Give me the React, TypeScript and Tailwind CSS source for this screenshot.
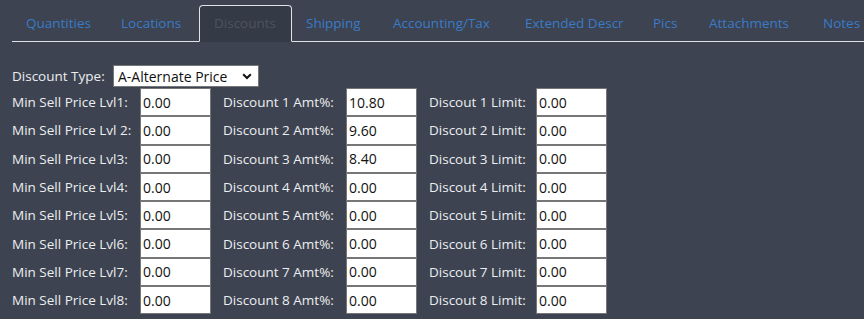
import React from "react";

const tabs: { label: string; w: string; active?: boolean }[] = [
  { label: "Quantities", w: "w-[95px]" },
  { label: "Locations", w: "w-[92px]" },
  { label: "Discounts", w: "w-[93px]", active: true },
  { label: "Shipping", w: "w-[87px]" },
  { label: "Accounting/Tax", w: "w-[132px]" },
  { label: "Extended Descr", w: "w-[128px]" },
  { label: "Pics", w: "w-[56px]" },
  { label: "Attachments", w: "w-[114px]" },
  { label: "Notes", w: "w-[70px]" },
];

const rows = [
  { l1: "Min Sell Price Lvl1:", v1: "0.00", l2: "Discount 1 Amt%:", v2: "10.80", l3: "Discout 1 Limit:", v3: "0.00" },
  { l1: "Min Sell Price Lvl 2:", v1: "0.00", l2: "Discount 2 Amt%:", v2: "9.60", l3: "Discout 2 Limit:", v3: "0.00" },
  { l1: "Min Sell Price Lvl3:", v1: "0.00", l2: "Discount 3 Amt%:", v2: "8.40", l3: "Discout 3 Limit:", v3: "0.00" },
  { l1: "Min Sell Price Lvl4:", v1: "0.00", l2: "Discount 4 Amt%:", v2: "0.00", l3: "Discout 4 Limit:", v3: "0.00" },
  { l1: "Min Sell Price Lvl5:", v1: "0.00", l2: "Discount 5 Amt%:", v2: "0.00", l3: "Discout 5 Limit:", v3: "0.00" },
  { l1: "Min Sell Price Lvl6:", v1: "0.00", l2: "Discount 6 Amt%:", v2: "0.00", l3: "Discout 6 Limit:", v3: "0.00" },
  { l1: "Min Sell Price Lvl7:", v1: "0.00", l2: "Discount 7 Amt%:", v2: "0.00", l3: "Discout 7 Limit:", v3: "0.00" },
  { l1: "Min Sell Price Lvl8:", v1: "0.00", l2: "Discount 8 Amt%:", v2: "0.00", l3: "Discout 8 Limit:", v3: "0.00" },
];

function Field({ value }: { value: string }) {
  return (
    <input
      type="text"
      defaultValue={value}
      className="w-[71px] h-[28.3px] shrink-0 border border-[#767676] bg-white pl-[2px] text-[14px] text-[#111] outline-none font-['Open_Sans',sans-serif]"
    />
  );
}

export default function App() {
  return (
    <div className="w-full min-h-[319px] bg-[#3d4350] overflow-hidden font-['Open_Sans',sans-serif] text-[13.5px]">
      <div className="pt-[5px] pl-[12px]">
        <ul className="flex flex-nowrap whitespace-nowrap border-b border-[#dfe2e6]">
          {tabs.map((t) => (
            <li
              key={t.label}
              className={
                t.active
                  ? `${t.w} shrink-0 h-[37px] -mb-px flex items-center pl-[14px] border border-[#dfe2e6] border-b-[#343a46] rounded-t-[4px] bg-[#343a46] text-[#4d5361]`
                  : `${t.w} shrink-0 h-[37px] -mb-px flex items-center pl-[14px] text-[#3a7bc8]`
              }
            >
              {t.label}
            </li>
          ))}
        </ul>
      </div>
      <div className="pl-[12px] pt-[23px] text-[#eceef1]">
        <div className="flex items-center h-[22px]">
          <span className="w-[101px] shrink-0">Discount Type:</span>
          <div className="relative w-[146px] h-[22px] bg-white border border-[#767676] flex items-center">
            <span className="pl-[4px] text-[14px] text-[#111]">A-Alternate Price</span>
            <svg
              className="absolute right-[6px] top-[7px]"
              width="10"
              height="7"
              viewBox="0 0 10 7"
              fill="none"
            >
              <path d="M1.2 1.2l3.8 3.8 3.8-3.8" stroke="#111" strokeWidth="2" />
            </svg>
          </div>
        </div>
        <div className="mt-[1px] flex flex-col">
          {rows.map((r) => (
            <div key={r.l1} className="flex items-center">
              <span className="w-[128px] shrink-0">{r.l1}</span>
              <Field value={r.v1} />
              <span className="w-[135px] pl-[12px] shrink-0">{r.l2}</span>
              <Field value={r.v2} />
              <span className="w-[119px] pl-[12px] shrink-0">{r.l3}</span>
              <Field value={r.v3} />
            </div>
          ))}
        </div>
      </div>
    </div>
  );
}
